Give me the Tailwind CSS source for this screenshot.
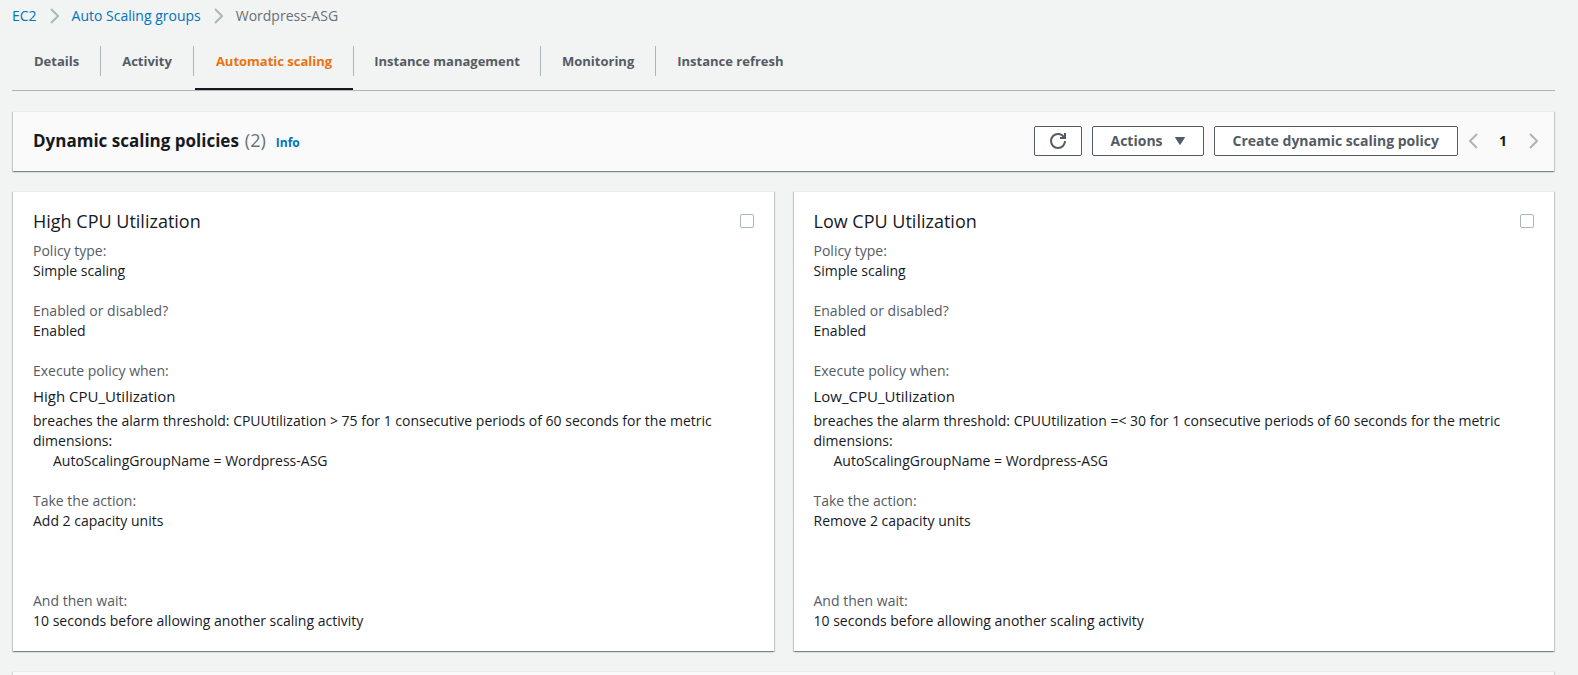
<!DOCTYPE html>
<html lang="en">
<head>
<meta charset="utf-8">
<title>Wordpress-ASG | Auto Scaling groups</title>
<script src="https://cdn.jsdelivr.net/npm/@tailwindcss/browser@4"></script>
</head>
<body class="min-h-screen bg-[#f2f3f3] pl-3 pr-[23px] font-['Open_Sans',sans-serif] text-sm leading-5 text-[#16191f]">

<nav aria-label="Breadcrumb" class="pt-[6px]">
  <ol class="flex items-center gap-[13px]">
    <li><a href="#" class="text-[#0073bb]">EC2</a></li>
    <li aria-hidden="true"><svg class="h-4 w-[9px]" viewBox="0 0 9 16" fill="none" stroke="#aab7b8" stroke-width="2"><path d="M1 1 8 8 1 15"/></svg></li>
    <li><a href="#" class="text-[#0073bb]">Auto Scaling groups</a></li>
    <li aria-hidden="true"><svg class="h-4 w-[9px]" viewBox="0 0 9 16" fill="none" stroke="#aab7b8" stroke-width="2"><path d="M1 1 8 8 1 15"/></svg></li>
    <li class="text-[#687078]">Wordpress-ASG</li>
  </ol>
</nav>

<div role="tablist" class="mt-5 flex items-start border-b border-[#aab7b8] pl-px text-[13px] font-bold leading-[30px] text-[#545b64]">
  <button role="tab" class="border-r border-[#aab7b8] px-[21px]">Details</button>
  <button role="tab" class="border-r border-[#aab7b8] px-[21px]">Activity</button>
  <div class="ml-px flex border-b-2 border-[#16191f] pb-3"><button role="tab" aria-selected="true" class="px-[21px] text-[#ec7211]">Automatic scaling</button></div>
  <button role="tab" class="border-x border-[#aab7b8] px-5">Instance management</button>
  <button role="tab" class="border-r border-[#aab7b8] px-[21px]">Monitoring</button>
  <button role="tab" class="px-[21px]">Instance refresh</button>
</div>

<main class="flex flex-col gap-5 px-px pt-5">
  <header class="flex items-center border-t border-[#eaeded] bg-[#fafafa] pb-[15px] pl-5 pr-4 pt-[14px] shadow-[0_1px_1px_0_rgba(0,28,36,0.3),1px_1px_1px_0_rgba(0,28,36,0.15),-1px_1px_1px_0_rgba(0,28,36,0.15)]">
    <div class="flex flex-1 items-baseline pb-0.5">
      <h1 class="text-[17px] font-bold">Dynamic scaling policies</h1>
      <span class="ml-[6px] text-lg leading-5 text-[#687078]">(2)</span>
      <a href="#" class="ml-[10px] text-xs font-bold text-[#0073bb]">Info</a>
    </div>
    <div class="flex items-center gap-[10px] font-bold text-[#545b64]">
      <button aria-label="Refresh" class="flex h-[30px] w-12 items-center justify-center rounded-xs border border-[#545b64] bg-white">
        <svg class="size-4" viewBox="0 0 16 16" fill="none" stroke="#545b64" stroke-width="2"><path d="M10 5h5V0"/><path d="M15 8a7 7 0 0 1-7 7 7 7 0 0 1-7-7 7 7 0 0 1 7-7 6.900 6.900 0 0 1 6.300 4"/></svg>
      </button>
      <button class="flex h-[30px] w-28 items-center justify-center gap-3 rounded-xs border border-[#545b64] bg-white">Actions
        <svg class="h-2 w-[10px]" viewBox="0 0 10 8" fill="#545b64" stroke="#545b64" stroke-linejoin="round"><path d="M.5.5h9L5 7.500z"/></svg>
      </button>
      <button class="h-[30px] rounded-xs border border-[#545b64] bg-white px-[18px]">Create dynamic scaling policy</button>
    </div>
    <nav aria-label="Pages" class="ml-[10px] flex items-center">
      <button aria-label="Previous page" class="flex w-[10px] justify-center"><svg class="h-4 w-[9px]" viewBox="0 0 9 16" fill="none" stroke="#aab7b8" stroke-width="2"><path d="M8 1 1 8 8 15"/></svg></button>
      <button aria-current="page" class="w-[50px] font-bold">1</button>
      <button aria-label="Next page" class="flex w-[10px] justify-center"><svg class="h-4 w-[9px]" viewBox="0 0 9 16" fill="none" stroke="#aab7b8" stroke-width="2"><path d="M1 1 8 8 1 15"/></svg></button>
    </nav>
  </header>

  <div class="grid grid-cols-2 gap-5">
    <article class="border-t border-[#eaeded] bg-white px-5 pb-5 pt-4 shadow-[0_1px_1px_0_rgba(0,28,36,0.3),1px_1px_1px_0_rgba(0,28,36,0.15),-1px_1px_1px_0_rgba(0,28,36,0.15)]">
      <div class="mb-[7px] flex items-center justify-between">
        <h2 class="text-lg leading-[26px]"><label for="high">High CPU Utilization</label></h2>
        <input id="high" type="checkbox" class="size-[14px] appearance-none rounded-xs border border-[#aab7b8] bg-white">
      </div>
      <dl>
        <dt class="text-[#545b64]">Policy type:</dt>
        <dd class="mb-5">Simple scaling</dd>
        <dt class="text-[#545b64]">Enabled or disabled?</dt>
        <dd class="mb-5">Enabled</dd>
        <dt class="text-[#545b64]">Execute policy when:</dt>
        <dd class="mb-5">
          <p class="text-[15px] leading-[30px]">High CPU_Utilization</p>
          <p>breaches the alarm threshold: CPUUtilization &gt; 75 for 1 consecutive periods of 60 seconds for the metric dimensions:</p>
          <p class="pl-5">AutoScalingGroupName = Wordpress-ASG</p>
        </dd>
        <dt class="text-[#545b64]">Take the action:</dt>
        <dd class="mb-[60px]">Add 2 capacity units</dd>
        <dt class="text-[#545b64]">And then wait:</dt>
        <dd>10 seconds before allowing another scaling activity</dd>
      </dl>
    </article>

    <article class="border-t border-[#eaeded] bg-white px-5 pb-5 pt-4 shadow-[0_1px_1px_0_rgba(0,28,36,0.3),1px_1px_1px_0_rgba(0,28,36,0.15),-1px_1px_1px_0_rgba(0,28,36,0.15)]">
      <div class="mb-[7px] flex items-center justify-between">
        <h2 class="text-lg leading-[26px]"><label for="low">Low CPU Utilization</label></h2>
        <input id="low" type="checkbox" class="size-[14px] appearance-none rounded-xs border border-[#aab7b8] bg-white">
      </div>
      <dl>
        <dt class="text-[#545b64]">Policy type:</dt>
        <dd class="mb-5">Simple scaling</dd>
        <dt class="text-[#545b64]">Enabled or disabled?</dt>
        <dd class="mb-5">Enabled</dd>
        <dt class="text-[#545b64]">Execute policy when:</dt>
        <dd class="mb-5">
          <p class="text-[15px] leading-[30px]">Low_CPU_Utilization</p>
          <p>breaches the alarm threshold: CPUUtilization =&lt; 30 for 1 consecutive periods of 60 seconds for the metric dimensions:</p>
          <p class="pl-5">AutoScalingGroupName = Wordpress-ASG</p>
        </dd>
        <dt class="text-[#545b64]">Take the action:</dt>
        <dd class="mb-[60px]">Remove 2 capacity units</dd>
        <dt class="text-[#545b64]">And then wait:</dt>
        <dd>10 seconds before allowing another scaling activity</dd>
      </dl>
    </article>
  </div>

  <section class="h-1 border-t border-[#eaeded] bg-[#fafafa] shadow-[1px_1px_1px_0_rgba(0,28,36,0.15),-1px_1px_1px_0_rgba(0,28,36,0.15)]"></section>
</main>
</body>
</html>
